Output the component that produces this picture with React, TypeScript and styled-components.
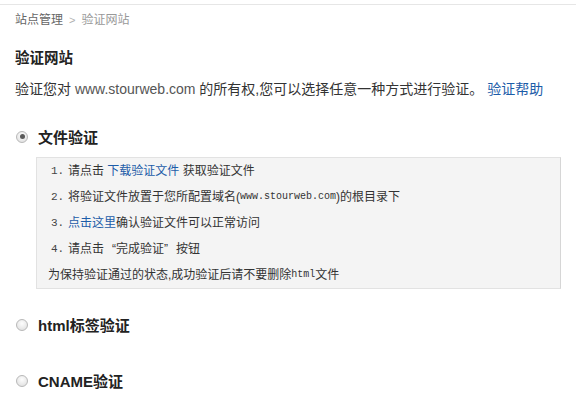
import React from "react";
import styled, { createGlobalStyle } from "styled-components";

const Global = createGlobalStyle`
  html, body { margin: 0; padding: 0; background: #fff; }
  body {
    font-family: "Liberation Sans", "Noto Sans CJK SC", sans-serif;
    color: #333;
  }
`;

const Page = styled.div`
  width: 576px;
  display: flex;
  flex-direction: column;
`;

const TopLine = styled.div`
  height: 4px;
  border-bottom: 1px solid #e6e6e6;
`;

const Content = styled.div`
  padding: 0 15px;
  display: flex;
  flex-direction: column;
`;

const Breadcrumb = styled.div`
  height: 30px;
  line-height: 30px;
  font-size: 12px;
  display: flex;
  align-items: center;
  gap: 6px;
`;

const Crumb = styled.span<{ $current?: boolean }>`
  color: ${(p) => (p.$current ? "#999" : "#666")};
`;

const Sep = styled.span`
  color: #b0b0b0;
  font-size: 11px;
`;

const Title = styled.h2`
  margin: 11px 0 0;
  font-size: 14.5px;
  font-weight: bold;
  line-height: 24px;
  color: #222;
`;

const Desc = styled.p`
  margin: 7px 0 0;
  font-size: 14px;
  line-height: 24px;
  color: #333;
  white-space: nowrap;
`;

const Url = styled.span`
  color: #555;
`;

const Link = styled.a`
  color: #1c5ca8;
  text-decoration: none;
`;

const Option = styled.label<{ $gap: number }>`
  margin-top: ${(p) => p.$gap}px;
  display: flex;
  align-items: center;
  gap: 10px;
  height: 24px;
  line-height: 24px;
  font-size: 15px;
  font-weight: bold;
  color: #222;
`;

const Radio = styled.span<{ $checked?: boolean }>`
  box-sizing: border-box;
  width: 12px;
  height: 12px;
  margin-left: 1px;
  margin-top: -3px;
  border-radius: 50%;
  border: 1px solid #b8b8b8;
  background: radial-gradient(circle at 50% 35%, #fdfdfd, #dcdcdc);
  display: flex;
  align-items: center;
  justify-content: center;
  &::after {
    content: "";
    display: ${(p) => (p.$checked ? "block" : "none")};
    width: 5px;
    height: 5px;
    border-radius: 50%;
    background: #5a5a5a;
  }
`;

const Box = styled.div`
  margin: 7px 0 0 21px;
  border: 1px solid #e2e2e2;
  border-right-color: #d6d6d6;
  background: #f4f4f4;
  padding-left: 11px;
  display: flex;
  flex-direction: column;
  font-size: 12px;
  color: #333;
`;

const Step = styled.div`
  height: 26px;
  line-height: 26px;
  display: flex;
  align-items: center;
  white-space: nowrap;
`;

const Num = styled.span`
  box-sizing: border-box;
  width: 20px;
  padding-left: 3px;
  font-family: "Liberation Mono", monospace;
  font-size: 11px;
  color: #444;
`;

const Mono = styled.span`
  font-family: "Liberation Mono", monospace;
  font-size: 10px;
`;

const Quote = styled.span<{ $open?: boolean }>`
  display: inline-block;
  width: 12px;
  text-align: ${(p) => (p.$open ? "right" : "left")};
`;

export default function App() {
  return (
    <Page>
      <Global />
      <TopLine />
      <Content>
        <Breadcrumb>
          <Crumb>站点管理</Crumb>
          <Sep>&gt;</Sep>
          <Crumb $current>验证网站</Crumb>
        </Breadcrumb>
        <Title>验证网站</Title>
        <Desc>
          验证您对 <Url>www.stourweb.com</Url> 的所有权,您可以选择任意一种方式进行验证。{" "}
          <Link href="#">验证帮助</Link>
        </Desc>
        <Option $gap={25}>
          <Radio $checked />
          文件验证
        </Option>
        <Box>
          <Step>
            <Num>1.</Num>请点击&nbsp;<Link href="#">下载验证文件</Link>&nbsp;获取验证文件
          </Step>
          <Step>
            <Num>2.</Num>将验证文件放置于您所配置域名(<Mono>www.stourweb.com</Mono>)的根目录下
          </Step>
          <Step>
            <Num>3.</Num>
            <Link href="#">点击这里</Link>确认验证文件可以正常访问
          </Step>
          <Step>
            <Num>4.</Num>请点击<Quote $open>“</Quote>完成验证<Quote>”</Quote>按钮
          </Step>
          <Step>
            为保持验证通过的状态,成功验证后请不要删除<Mono>html</Mono>文件
          </Step>
        </Box>
        <Option $gap={25}>
          <Radio />
          html标签验证
        </Option>
        <Option $gap={32}>
          <Radio />
          CNAME验证
        </Option>
      </Content>
    </Page>
  );
}
